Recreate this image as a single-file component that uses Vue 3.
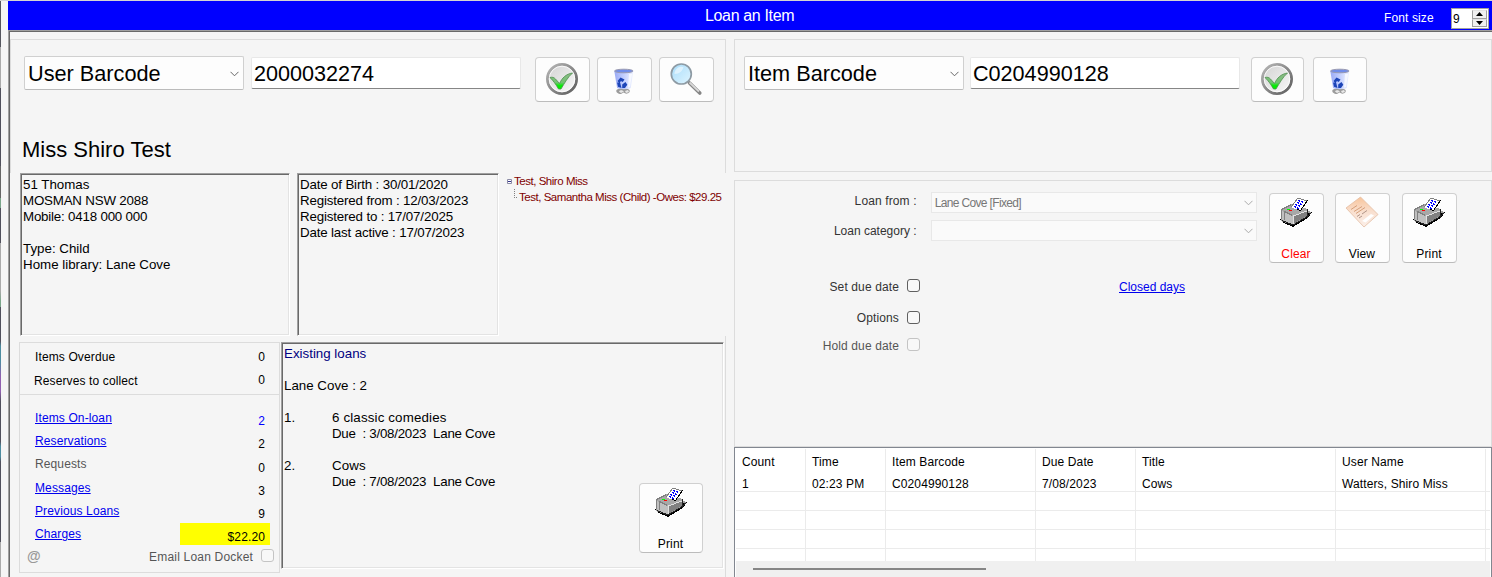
<template>
  <div class="app">
    <div class="desktop-edge"></div>
    <div class="window">
      <header class="titlebar">
        <span class="title">Loan an Item</span>
        <label class="font-label">Font size</label>
        <div class="spinner">
          <span class="spin-value">{{ fontSize }}</span>
          <div class="spin-buttons">
            <button @click="fontSize++"><svg width="7" height="4" viewBox="0 0 7 4"><path d="M0 4 3.5 0 7 4z" /></svg></button>
            <button @click="fontSize--"><svg width="7" height="4" viewBox="0 0 7 4"><path d="M0 0 3.5 4 7 0z" /></svg></button>
          </div>
        </div>
      </header>

      <main class="workspace">
        <section class="user-pane">
          <div class="user-top">
            <div class="search-row">
              <div class="combo">
                <span>User Barcode</span>
                <svg class="chevron" width="9" height="6" viewBox="0 0 9 6"><path d="M.5 .8 4.5 4.8 8.5 .8" /></svg>
              </div>
              <div class="text-input">2000032274</div>
              <button class="icon-btn first"><svg class="ic-tick" width="34" height="34"><use href="#ic-tick" /></svg></button>
              <button class="icon-btn"><svg class="ic-bin" width="34" height="34"><use href="#ic-bin" /></svg></button>
              <button class="icon-btn"><svg class="ic-tick" width="34" height="34"><use href="#ic-lens" /></svg></button>
            </div>
            <h1 class="user-name">Miss Shiro Test</h1>
          </div>

          <div class="details">
            <div class="sunken address">
              <p v-for="(line, i) in address" :key="i" :class="{ digits: /\d{3}/.test(line) }">{{ line }}</p>
            </div>
            <div class="sunken dates">
              <p v-for="line in dates" :key="line">{{ line }}</p>
            </div>
            <div class="family">
              <div class="node">
                <svg width="5" height="5" viewBox="0 0 5 5"><path d="M.5 .5h4v4h-4z" fill="#fff" stroke="#8c8ca6" /><path d="M1 2.5h3" stroke="#33338c" /></svg>
                <span>Test, Shiro Miss</span>
              </div>
              <div class="node child">
                <i class="branch"></i>
                <span>Test, Samantha Miss (Child) -Owes: $29.25</span>
              </div>
            </div>
          </div>

          <div class="user-bottom">
            <div class="summary">
              <div class="alerts">
                <div class="stat"><span>Items Overdue</span><b>0</b></div>
                <div class="stat second"><span>Reserves to collect</span><b>0</b></div>
              </div>
              <div class="counts">
                <div v-for="c in counts" :key="c.label" class="stat">
                  <span :class="c.muted ? 'muted' : 'link'">{{ c.label }}</span>
                  <b :class="{ blue: c.blue, owed: c.owed }">{{ c.value }}</b>
                </div>
                <div class="docket">
                  <span class="at">@</span>
                  <span class="docket-label">Email Loan Docket</span>
                  <i class="check off"></i>
                </div>
              </div>
            </div>
            <div class="sunken loans">
              <div class="loan-text">
                <p class="heading">Existing loans</p>
                <p></p>
                <p>Lane Cove : 2</p>
                <template v-for="(loan, i) in loans" :key="loan.title">
                  <p></p>
                  <p class="loan-title"><span class="num">{{ i + 1 }}.</span>{{ loan.title }}</p>
                  <p class="due">Due&nbsp; : {{ loan.due }}&nbsp; Lane Cove</p>
                </template>
              </div>
              <button class="tall-btn loans-print">
                <svg width="34" height="32"><use href="#ic-printer" /></svg>
                <span>Print</span>
              </button>
            </div>
          </div>
        </section>

        <section class="item-pane">
          <div class="group item-search">
            <div class="search-row">
              <div class="combo">
                <span>Item Barcode</span>
                <svg class="chevron" width="9" height="6" viewBox="0 0 9 6"><path d="M.5 .8 4.5 4.8 8.5 .8" /></svg>
              </div>
              <div class="text-input">C0204990128</div>
              <button class="icon-btn item-ok"><svg class="ic-tick" width="34" height="34"><use href="#ic-tick" /></svg></button>
              <button class="icon-btn item-bin"><svg class="ic-bin" width="34" height="34"><use href="#ic-bin" /></svg></button>
            </div>
          </div>

          <div class="group options">
            <div class="options-top">
              <div class="fields">
                <div class="field">
                  <label>Loan from :</label>
                  <div class="select"><span>Lane Cove [Fixed]</span><svg class="chevron" width="9" height="6" viewBox="0 0 9 6"><path d="M.5 .8 4.5 4.8 8.5 .8" /></svg></div>
                </div>
                <div class="field">
                  <label class="low">Loan category :</label>
                  <div class="select"><span></span><svg class="chevron" width="9" height="6" viewBox="0 0 9 6"><path d="M.5 .8 4.5 4.8 8.5 .8" /></svg></div>
                </div>
              </div>
              <button class="tall-btn clear">
                <svg width="34" height="32"><use href="#ic-printer" /></svg>
                <span>Clear</span>
              </button>
              <button class="tall-btn view">
                <svg width="34" height="32"><use href="#ic-page" /></svg>
                <span>View</span>
              </button>
              <button class="tall-btn print">
                <svg width="34" height="32"><use href="#ic-printer" /></svg>
                <span>Print</span>
              </button>
            </div>
            <div class="toggle"><label>Set due date</label><i class="check"></i><span class="link closed">Closed days</span></div>
            <div class="toggle t2"><label>Options</label><i class="check"></i></div>
            <div class="toggle t3"><label class="dim">Hold due date</label><i class="check off"></i></div>
          </div>

          <div class="grid-box">
            <div class="grid head">
              <span v-for="h in headers" :key="h">{{ h }}</span><span></span>
            </div>
            <div v-for="(row, r) in rows" :key="r" class="grid row">
              <span v-for="(cell, i) in row" :key="i">{{ cell }}</span><span></span>
            </div>
            <div class="scrollbar"><i></i></div>
          </div>
        </section>
      </main>
    </div>

    <svg class="defs" width="0" height="0">
      <defs>
        <linearGradient id="g-rim" x1="0" y1="0" x2="1" y2="1">
          <stop offset="0" stop-color="#b8b8b8" /><stop offset="1" stop-color="#5c5c5c" />
        </linearGradient>
        <linearGradient id="g-face" x1="0" y1="0" x2="1" y2="1">
          <stop offset="0" stop-color="#d2d2d2" /><stop offset="1" stop-color="#fafafa" />
        </linearGradient>
        <linearGradient id="g-tick" x1="0" y1="0" x2="0" y2="1">
          <stop offset="0" stop-color="#8fb98a" /><stop offset=".6" stop-color="#70c470" /><stop offset=".8" stop-color="#00ee00" />
        </linearGradient>
        <linearGradient id="g-bin" x1="0" y1="0" x2="1" y2="0">
          <stop offset="0" stop-color="#8ea0f4" /><stop offset=".5" stop-color="#bccaff" /><stop offset="1" stop-color="#eef2ff" />
        </linearGradient>
        <linearGradient id="g-lens" x1="0" y1="0" x2="1" y2="1">
          <stop offset="0" stop-color="#a8dcfa" /><stop offset="1" stop-color="#dff5ff" />
        </linearGradient>
        <linearGradient id="g-page" x1="0" y1="0" x2="0" y2="1">
          <stop offset="0" stop-color="#f8c49a" /><stop offset=".5" stop-color="#f9e0d0" /><stop offset="1" stop-color="#fbefe9" />
        </linearGradient>

        <symbol id="ic-tick" viewBox="0 0 34 34">
          <circle cx="17" cy="17" r="14.6" fill="url(#g-face)" stroke="url(#g-rim)" stroke-width="2.8" />
          <circle cx="17" cy="17" r="12.8" fill="none" stroke="#fff" stroke-width=".8" />
          <path d="M5 15.500c2-.6 4-.2 5.500 1.500l4 4.500c2.500-5.500 6.500-9.500 13-10.500-4.600 4-7.600 9.500-11.500 16h-2.500C11 22.500 8.500 19 5 15.500z" fill="url(#g-tick)" stroke="#4c8f4c" stroke-width=".8" />
        </symbol>

        <symbol id="ic-bin" viewBox="0 0 34 34">
          <path d="M9.500 27c2-2.500 11-2.500 13 0 1 2-1 4-4 3.600l-2-1-2.500 1.400c-3 0-5.500-2-4.500-4z" fill="#9c9c9c" />
          <path d="M12 28.500c2-2 3-1 5 0l-3 1.600zM18 28l3-1 1 2-3 1z" fill="#e8e8e8" />
          <path d="M7.300 8h19L23.800 25c-3 1.500-10.500 1.500-13.700 0z" fill="url(#g-bin)" opacity=".9" />
          <path d="M22 11h3l-2 13-2 .8z" fill="#fff" opacity=".7" />
          <ellipse cx="16.800" cy="8" rx="9.300" ry="1.800" fill="#6f8cea" stroke="#9a9ab0" />
          <path d="M10.500 18l3-3.500 4 2-1.800 2.600-1.800-1-1.500 2.400zM10 19.500l3.200 .5 1.300 5-3.500-1.200zM15.200 25v-3.500l3.300-2.500 1.800 2.800-2.300 3.200z" fill="#1d45b8" />
        </symbol>

        <symbol id="ic-lens" viewBox="0 0 34 34">
          <path d="M20.500 21l10.300 10" stroke="#868686" stroke-width="3.600" stroke-linecap="round" />
          <path d="M20.500 20.500l9.500 9" stroke="#d8d8d8" stroke-width="1.800" />
          <circle cx="12.300" cy="12" r="10" fill="url(#g-lens)" stroke="#8e9ba4" stroke-width="1.700" />
          <path d="M5.500 12a7 7 0 0 1 9-7c-1 4-4 7-9 7z" fill="#fff" opacity=".5" />
        </symbol>

        <symbol id="ic-printer" viewBox="0 0 34 32" shape-rendering="crispEdges">
          <path d="M1 23l2 3 11 5 15-9 4-6h-4z" fill="#000" />
          <path d="M2 22v3l12 4.500 15-9V17h3v-1l-4-2z" fill="#a0a0a0" />
          <path d="M2 13v10l12 6V19z" fill="#c0c0c0" />
          <path d="M14 19v9l14-8v-5z" fill="#808080" />
          <path d="M3 13l10-5 15 5v2L14 20 3 15z" fill="#a8a8a8" />
          <path d="M2.500 22.500v-9l2-1 8-4M5.500 24v-8.500l8 4" fill="none" stroke="#808080" />
          <path d="M14.500 28v-8l13-5" fill="none" stroke="#e0e0e0" />
          <path d="M28.500 13v8l3-4M3 24.500l11 4.500 15-9" fill="none" stroke="#222" />
          <path d="M8 13h3v1H8z" fill="#00ff00" /><path d="M10 14h3v1h-3z" fill="#ff0000" />
          <path d="M12 11l7-9 9 3-7 10z" fill="#fff" />
          <path d="M12 11l7-9 9 3" fill="none" stroke="#808080" />
          <path d="M28.500 4.500l-7 10-3-1" fill="none" stroke="#000" />
          <path d="M19 4.500l6 2M18 6.500l5 2M16 8.500l6 2M15 10.500l5 2" stroke="#0000ff" stroke-width="1.200" stroke-dasharray="2 1" />
        </symbol>

        <symbol id="ic-page" viewBox="0 0 34 32">
          <path d="M1 12L15.500 1 33 18.500 19 31z" fill="url(#g-page)" stroke="#e3bda2" stroke-width=".8" />
          <path d="M6 13.500l6-4M9 15.500l8-5M11 17.500l9-6" stroke="#d29870" stroke-width=".9" />
          <path d="M12 20.500l3-2M17 18l5-3.500M14 22l3-2" stroke="#a88c80" stroke-width=".9" />
          <path d="M17 25l9-7 3 1.500-8.500 7z" fill="#fff" />
        </symbol>
      </defs>
    </svg>
  </div>
</template>

<script setup>
import { ref } from 'vue'

const fontSize = ref(9)

const address = ['51 Thomas', 'MOSMAN NSW 2088', 'Mobile: 0418 000 000', '', 'Type: Child', 'Home library: Lane Cove']

const dates = [
  'Date of Birth : 30/01/2020',
  'Registered from : 12/03/2023',
  'Registered to : 17/07/2025',
  'Date last active : 17/07/2023',
]

const counts = [
  { label: 'Items On-loan', value: '2', blue: true },
  { label: 'Reservations', value: '2' },
  { label: 'Requests', value: '0', muted: true },
  { label: 'Messages', value: '3' },
  { label: 'Previous Loans', value: '9' },
  { label: 'Charges', value: '$22.20', owed: true },
]

const loans = [
  { title: '6 classic comedies', due: '3/08/2023' },
  { title: 'Cows', due: '7/08/2023' },
]

const headers = ['Count', 'Time', 'Item Barcode', 'Due Date', 'Title', 'User Name']

const rows = [
  ['1', '02:23 PM', 'C0204990128', '7/08/2023', 'Cows', 'Watters, Shiro Miss'],
  ['', '', '', '', '', ''],
  ['', '', '', '', '', ''],
  ['', '', '', '', '', ''],
  ['', '', '', '', '', ''],
]
</script>

<style>
body {
  background: #f5f5f5;
  overflow: hidden;
}
</style>

<style scoped>
* {
  box-sizing: border-box;
}

.app {
  display: flex;
  width: 1492px;
  height: 577px;
  overflow: hidden;
  background: #f5f5f5;
  border-top: 1px solid #d4d4d4;
  font-family: 'Liberation Sans', Arial, sans-serif;
  font-size: 12px;
  letter-spacing: 0.12px;
  color: #000;
}

p,
h1 {
  margin: 0;
  font-weight: normal;
}

b {
  font-weight: normal;
}

button {
  font: inherit;
  letter-spacing: inherit;
  color: inherit;
  padding: 0;
}

.defs {
  position: absolute;
}

/* sliver of the desktop behind the window */
.desktop-edge {
  width: 8px;
  flex: none;
  border-left: 1px solid;
  border-image: linear-gradient(#55565e 0 47px, #aaa 47px 88px, #50505c 88px 165px, #666 165px 197px, #7aa68a 197px 207px, #50505c 207px 242px, #aaa 242px 290px, #7aa68a 300px 306px, #50505c 306px 340px, #4c8ca0 345px 360px, #9060b0 375px 390px, #50505c 400px 440px, #4c8ca0 445px 455px, #50505c 460px 540px, #aaa 540px) 1;
}

.window {
  flex: 1;
  display: flex;
  flex-direction: column;
}

.titlebar {
  display: flex;
  height: 29px;
  flex: none;
  background: #0000ff;
  color: #fff;
}

.title {
  width: 679px;
  margin-left: 697px;
  font-size: 16px;
  letter-spacing: -0.35px;
  line-height: 29px;
}

.font-label {
  width: 67px;
  line-height: 34px;
}

.spinner {
  display: flex;
  justify-content: space-between;
  width: 38px;
  height: 21px;
  margin-top: 7px;
  padding: 1px;
  background: #fff;
  border: 1px solid #a0a0a0;
  color: #000;
}

.spin-value {
  font-size: 12px;
  line-height: 18px;
}

.spin-buttons {
  display: flex;
  flex-direction: column;
  width: 15px;
}

.spin-buttons button {
  display: flex;
  align-items: center;
  justify-content: center;
  height: 8.5px;
  background: #f0f0f0;
  border: 1px solid #a0a0a0;
  border-top-color: #e3e3e3;
}

.workspace {
  flex: 1;
  display: flex;
  border-top: 1px solid #a0a0a0;
  border-left: 1px solid #a0a0a0;
  box-shadow: inset 1px 1px #696969;
  padding: 8px 0 0 1px;
}

.user-pane {
  width: 716px;
  height: 538px;
}

.user-top {
  height: 134px;
  border: 1px solid #dcdcdc;
  border-bottom: 0;
  padding: 16px 0 0 13px;
}

.search-row {
  display: flex;
  height: 46px;
}

.combo {
  display: flex;
  align-items: center;
  justify-content: space-between;
  width: 220px;
  height: 34px;
  padding: 1px 4px 0 3px;
  background: #fdfdfd;
  border: 1px solid #d0d0d0;
  border-bottom-color: #bbb;
  border-radius: 2px;
  font-size: 21.7px;
  letter-spacing: 0;
}

.chevron path {
  fill: none;
  stroke: #666;
}

.text-input {
  width: 270px;
  height: 32px;
  margin: 1px 0 0 7px;
  padding-left: 2px;
  background: #fff;
  border: 1px solid #e8e8e8;
  border-bottom: 1px solid #868686;
  border-radius: 2px;
  font-size: 21.6px;
  letter-spacing: 0;
  line-height: 32px;
}

.icon-btn {
  display: flex;
  align-items: center;
  justify-content: center;
  width: 55px;
  height: 45px;
  margin: 1px 0 0 7px;
  background: #fdfdfd;
  border: 1px solid #d0d0d0;
  border-bottom-color: #bcbcbc;
  border-radius: 4px;
}

.icon-btn .ic-tick {
  margin: 0 2px 2px 0;
}

.icon-btn .ic-bin {
  margin: 1px 1px 0 0;
}

.icon-btn.first {
  margin-left: 14px;
}

.user-name {
  margin: 36px 0 0 -2px;
  font-size: 22px;
  letter-spacing: 0;
  line-height: 24px;
}

.details {
  display: flex;
  height: 163px;
  padding-left: 10px;
}

.sunken {
  border: 1px solid;
  border-color: #a0a0a0 #fff #fff #a0a0a0;
  box-shadow: inset 1px 1px #696969, inset -1px -1px #e3e3e3;
  font-size: 13.33px;
  letter-spacing: 0;
}

.sunken p {
  height: 16px;
  line-height: 16px;
  white-space: nowrap;
}

.address {
  width: 270px;
  padding: 3px 2px;
}

.address .digits {
  letter-spacing: -0.2px;
}

.dates {
  width: 202px;
  margin-left: 7px;
  padding: 3px 2px;
  letter-spacing: -0.16px;
}

.family {
  padding: 0 0 0 8px;
  font-size: 11.5px;
  letter-spacing: -0.47px;
  color: #800000;
  white-space: nowrap;
}

.node {
  display: flex;
  align-items: center;
  height: 16px;
  gap: 2px;
}

.node.child {
  padding-left: 7px;
}

.branch {
  width: 3px;
  height: 9px;
  margin-top: -7px;
  border-left: 1px dotted #808080;
  border-bottom: 1px dotted #808080;
}

.user-bottom {
  display: flex;
  height: 241px;
  padding: 6px 0 0 9px;
  border-right: 1px solid #dcdcdc;
}

.summary {
  width: 261px;
  height: 231px;
}

.alerts {
  height: 53px;
  padding: 7px 13px 0 15px;
  border: 1px solid #dcdcdc;
}

.stat {
  display: flex;
  justify-content: space-between;
  height: 23.3px;
  line-height: 14px;
}

.alerts .second span {
  margin-left: -1px;
  padding-top: 1px;
}

.counts {
  height: 178px;
  padding: 16px 13px 0 15px;
  border: 1px solid #dcdcdc;
  border-top: 0;
}

.stat b {
  padding-right: 1px;
}

.counts b {
  height: 21px;
  padding-top: 3px;
}

.link {
  color: #0000ee;
  text-decoration: underline;
}

.muted {
  margin-top: -0.5px;
  color: #555;
}

.blue {
  color: #0000ff;
}

.counts .owed {
  width: 90px;
  height: 22px;
  margin: -4px -4px 0 0;
  padding: 7px 5px 0 0;
  background: #ffff00;
  text-align: right;
}

.docket {
  display: flex;
  height: 16px;
  margin: -2px -9px 0 -8px;
  color: #555;
}

.at {
  width: 122px;
  font-size: 14px;
  line-height: 14px;
  font-weight: bold;
  color: #999;
}

.docket-label {
  width: 112px;
  line-height: 16px;
  letter-spacing: 0.2px;
}

.check {
  width: 13px;
  height: 13px;
  background: #f8f8f8;
  border: 1px solid #606060;
  border-radius: 3px;
}

.check.off {
  border-color: #c4c4c4;
}

.loans {
  display: flex;
  justify-content: space-between;
  width: 443px;
  height: 227px;
  margin-left: 1px;
  padding: 3px 20px 15px 2px;
}

.loans .heading {
  color: #000080;
}

.loan-title {
  letter-spacing: 0.15px;
}

.num {
  display: inline-block;
  width: 48px;
}

.due {
  padding-left: 48px;
  letter-spacing: -0.27px;
}

.tall-btn {
  display: flex;
  flex-direction: column;
  align-items: center;
  justify-content: space-between;
  width: 55px;
  height: 70px;
  padding: 2px 1px 1px 0;
  background: #fdfdfd;
  border: 1px solid #d0d0d0;
  border-bottom-color: #bcbcbc;
  border-radius: 4px;
  font-size: 12px;
  letter-spacing: 0.12px;
}

.loans-print {
  width: 64px;
  align-self: flex-end;
}

.item-pane {
  width: 758px;
  height: 538px;
  margin-left: 8px;
}

.group {
  border: 1px solid #dcdcdc;
}

.item-search {
  height: 133px;
  padding: 16px 0 0 9px;
}

.item-search .text-input {
  margin-left: 6px;
}

.item-ok {
  width: 53px;
  margin-left: 11px;
}

.item-bin {
  width: 54px;
  margin-left: 9px;
}

.options {
  height: 267px;
  margin-top: 8px;
  color: #333;
}

.options-top {
  display: flex;
  height: 98px;
  padding-top: 12px;
}

.fields {
  width: 522px;
}

.field {
  display: flex;
  height: 28px;
}

.field label {
  width: 182px;
  padding-top: 1px;
  text-align: right;
}

.field .low {
  padding-top: 3px;
  letter-spacing: 0;
}

.select {
  display: flex;
  align-items: center;
  justify-content: space-between;
  width: 327px;
  height: 21px;
  margin: -1px 0 0 14px;
  padding: 0 3px;
  background: #fafafa;
  border: 1px solid #e8e8e8;
  font-size: 12px;
  letter-spacing: -0.65px;
  color: #777;
}

.select .chevron path {
  stroke: #aaa;
}

.tall-btn.clear {
  margin-left: 12px;
  color: #ff0000;
}

.tall-btn.view {
  margin-left: 11px;
  color: #000;
}

.tall-btn.print {
  margin-left: 12px;
  color: #000;
}

.toggle {
  display: flex;
  height: 32px;
}

.toggle.t2 {
  height: 27px;
}

.toggle label {
  width: 164px;
  margin-right: 8px;
  padding-top: 1px;
  text-align: right;
}

.toggle.t2 label {
  padding-top: 0;
}

.toggle .dim {
  color: #555;
}

.closed {
  margin-left: 199px;
  padding-top: 1px;
  letter-spacing: 0;
}

.grid-box {
  height: 131px;
  padding: 1px 1px 0;
  background: #fff;
  border: 1px solid #828790;
  border-bottom: 0;
}

.grid {
  display: grid;
  grid-template-columns: 70px 80px 150px 100px 200px 150px 1fr;
}

.grid span {
  height: 100%;
  border-right: 1px solid #ebebeb;
  padding-left: 6px;
  white-space: nowrap;
}

.grid span:last-child {
  border-right: 0;
}

.head {
  height: 24px;
  line-height: 26px;
}

.row {
  height: 19px;
  line-height: 22px;
  border-bottom: 1px solid #ebebeb;
}

.row:nth-child(6) {
  height: 12px;
  border-bottom: 0;
}

.row:nth-child(2) span:last-of-type {
  letter-spacing: 0;
}

.scrollbar {
  height: 16px;
  padding: 7px 0 0 17px;
  background: #f0f0f0;
}

.scrollbar i {
  display: block;
  width: 233px;
  height: 2px;
  background: #868686;
}
</style>
